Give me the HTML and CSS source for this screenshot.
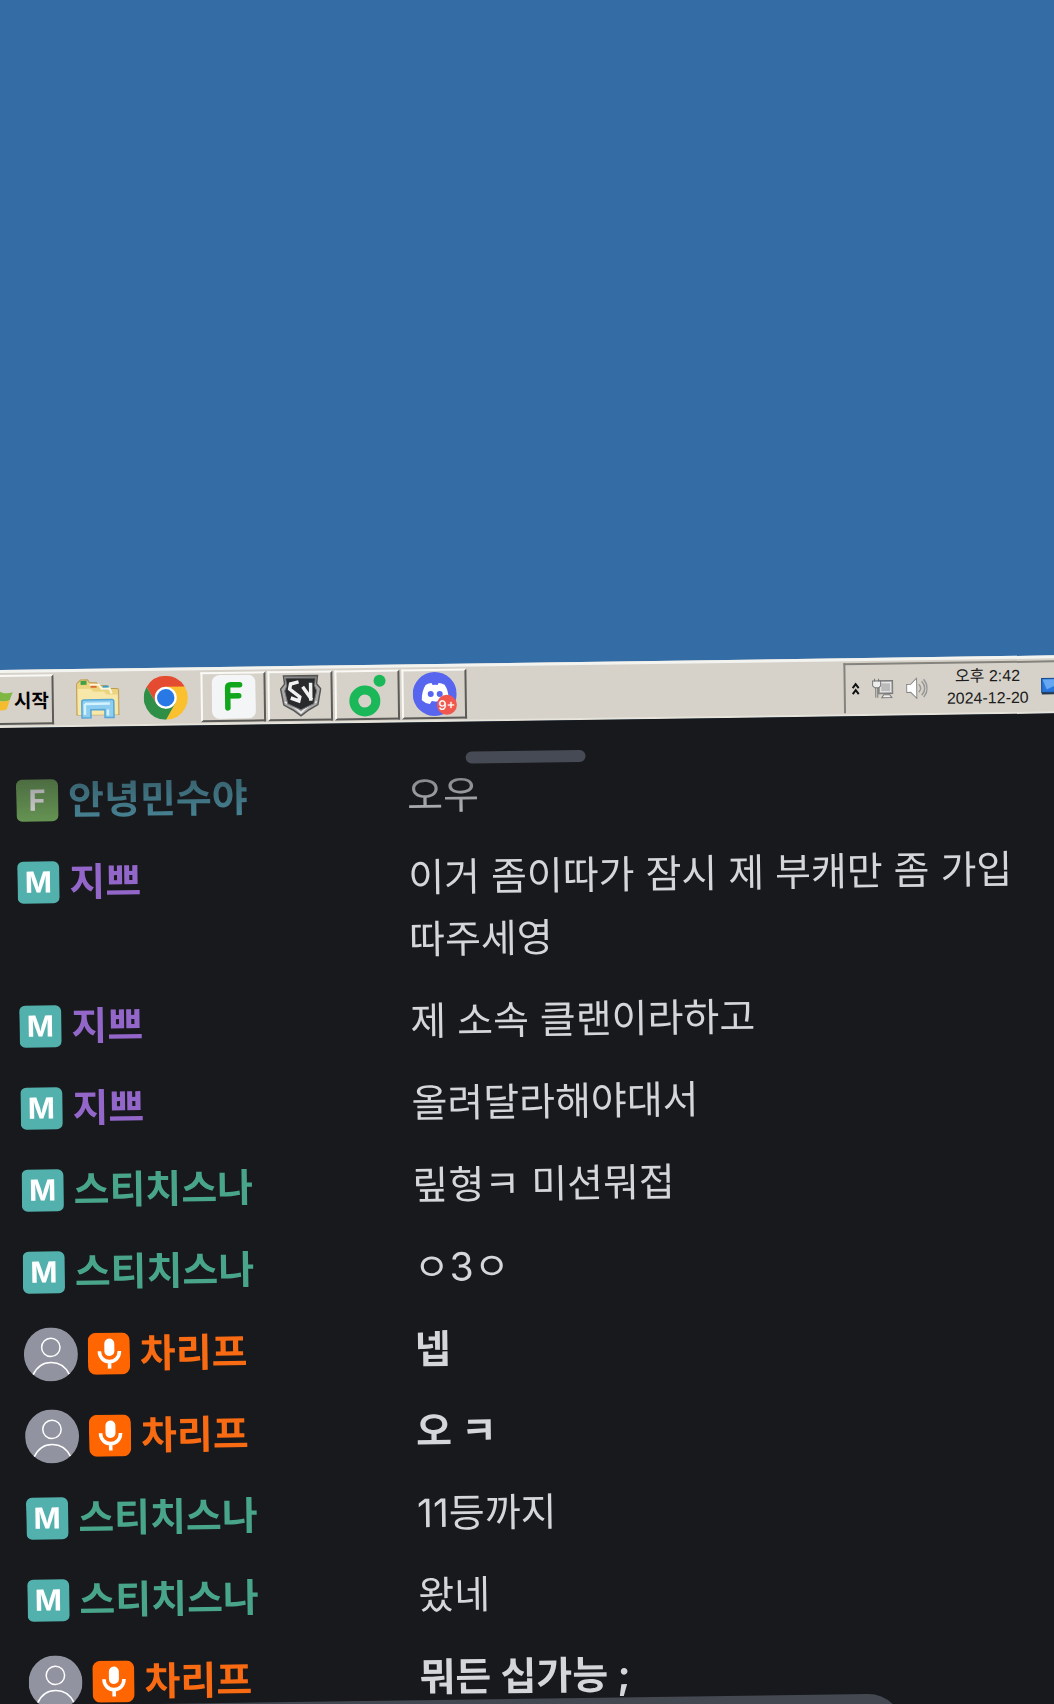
FILE: index.html
```html
<!DOCTYPE html>
<html lang="ko">
<head>
<meta charset="utf-8">
<meta name="viewport" content="width=device-width, initial-scale=1">
<title>채팅</title>
<link rel="stylesheet" href="styles.css">
</head>
<body>
<svg class="symbols" aria-hidden="true">
  <symbol id="person" viewBox="0 0 54 54">
    <circle cx="27" cy="27" r="27" fill="#9194a0"/>
    <g fill="none" stroke="#fff" stroke-width="1.5">
      <circle cx="27" cy="20" r="9.2"/>
      <path d="M9 47C13 38.500 20 35 27 35s14 3.500 18 12"/>
    </g>
  </symbol>
  <symbol id="mic" viewBox="0 0 42 42">
    <rect width="42" height="42" rx="8" fill="#ff6500"/>
    <rect x="16.500" y="6" width="10" height="17.500" rx="5" fill="#fff"/>
    <path d="M11.500 18.500c0 6.500 4.500 10.500 10 10.500s10-4 10-10.500M21.500 29v7" fill="none" stroke="#fff" stroke-width="3.600"/>
  </symbol>
</svg>
<div class="viewport">
  <div class="scene">
    <div class="desktop"></div>
    <nav class="taskbar" aria-label="작업 표시줄">
      <button class="start" type="button">
        <svg width="26" height="24" viewBox="0 0 26 24" aria-hidden="true">
          <path d="M3 3c4-3 6-2 9 0l-2 8c-3-2-6-2-9 0z" fill="#e8562a"/>
          <path d="M11 3c5 3 9 3 14 1l-3 8c-4 2-8 2-12 0z" fill="#7eb842"/>
          <path d="M1 13c3-2 6-2 9 0l-2 8c-3-2-6-2-9 0z" fill="#3f82d0"/>
          <path d="M10 12c4 2 8 2 12 0l-3 9c-4 2-8 2-11 0z" fill="#f5bd2d"/>
        </svg>
        <span>시작</span>
      </button>
      <button class="launcher" type="button" aria-label="파일 탐색기">
        <svg width="44" height="42" viewBox="0 0 44 42">
          <path d="M1 7q0-2 2-3l2-2h7l2 3h7l2 3h8l2 3h8q2 0 2 2v24H1z" fill="#ecd37f" stroke="#bd9d50"/>
          <path d="M2 11h13l3 3h10l3 3h11v20H2z" fill="#f7e7a8"/>
          <path d="M5 3h6v4H5z" fill="#43a047"/><path d="M15 6h6v4h-6z" fill="#d86831"/><path d="M27 8h6v4h-6z" fill="#3a9cca"/>
          <path d="M14 7h9l3 4h8l2 5" fill="none" stroke="#fff8d8" stroke-width="2"/>
          <path d="M6 24q0-2 2-2h28q2 0 2 2v16h-9v-8H15v8H6z" fill="#8dcef0" stroke="#56a6d7" stroke-width="1.500"/>
          <path d="M9 26h25M9 26v11M32 32v6" stroke="#d4f2ff" stroke-width="2.500" fill="none"/>
        </svg>
      </button>
      <button class="launcher" type="button" aria-label="Chrome">
        <svg width="44" height="44" viewBox="0 0 48 48">
          <path d="M24 24 3.200 12A24 24 0 0 1 44.800 12z" fill="#e54b30"/>
          <path d="M24 24 44.800 12A24 24 0 0 1 24 48z" fill="#fbc02d"/>
          <path d="M24 12h20.800L34.400 30z" fill="#fbc02d"/>
          <path d="M13.600 30 3.200 12 24 12z" fill="#e54b30"/>
          <path d="M3.200 12 13.600 30 24 36 34.400 30 24 48A24 24 0 0 1 3.200 12z" fill="#2f8f46"/>
          <circle cx="24" cy="24" r="12" fill="#fff"/><circle cx="24" cy="24" r="9.500" fill="#2878e6"/>
        </svg>
      </button>
      <div class="tasks">
        <button class="task" type="button" aria-label="F">
          <svg width="44" height="44" viewBox="0 0 44 44">
            <rect width="44" height="44" rx="8" fill="#f4f5f6"/>
            <path d="M16 33V13q0-3 3-3h9M16 21h11" fill="none" stroke="#11a61c" stroke-width="5.500" stroke-linecap="round"/>
          </svg>
        </button>
        <button class="task" type="button" aria-label="SA">
          <svg width="42" height="44" viewBox="0 0 42 44">
            <path d="M4 2h34l-1 8 4 5-3 16-9 5-8 6-8-6-9-5L1 15l4-5z" fill="#aaa" stroke="#555" stroke-width="1.500"/>
            <path d="M5 28q8 3 16 11 8-8 16-11" fill="none" stroke="#eee" stroke-width="1.500"/>
            <path d="M6 4h30l-1 8 2 5-3 13-13 6-13-6-3-13 2-5z" fill="#292a2b" stroke="#777"/>
            <path d="m19 8-8 2-1 5 10 8-1 4-8-3M23 13l9 13M31 9v18" fill="none" stroke="#f1f1f1" stroke-width="3.500"/>
          </svg>
        </button>
        <button class="task" type="button" aria-label="o">
          <svg width="38" height="44" viewBox="0 0 38 44">
            <circle cx="16" cy="28" r="11" fill="none" stroke="#1ab858" stroke-width="9"/>
            <circle cx="31" cy="8" r="6" fill="#1ab858"/>
          </svg>
        </button>
        <button class="task" type="button" aria-label="Discord">
          <svg width="44" height="44" viewBox="0 0 44 44">
            <circle cx="22" cy="22" r="22" fill="#5865ee"/>
            <path d="M13 13q3-2 6-2l1 2q3-.5 5 0l1-2q3 0 6 2 4 6 4 15-3 3-8 4l-2-3q-4 1-7 0l-2 3q-5-1-8-4 0-9 4-15z" fill="#fff"/>
            <circle cx="18" cy="22" r="3" fill="#5865ee"/><circle cx="27" cy="22" r="3" fill="#5865ee"/>
          </svg>
          <span class="unread">9+</span>
        </button>
      </div>
      <div class="tray">
        <svg width="8" height="14" viewBox="0 0 8 14" aria-hidden="true"><path d="m1 6 3-4 3 4M1 12l3-4 3 4" fill="none" stroke="#111" stroke-width="2"/></svg>
        <svg width="22" height="22" viewBox="0 0 22 22" aria-hidden="true">
          <rect x="7" y="3" width="14" height="13" fill="#aaa" stroke="#777"/><rect x="9" y="5" width="10" height="9" fill="#bbb" stroke="#eee"/>
          <path d="M10 20h10l-2-3h-6z" fill="#eee" stroke="#777"/>
          <path d="M1 3h8v5l-2 2H3L1 8zM3 1v3M7 1v3M4 10v10M6 10v10" fill="#eee" stroke="#777"/>
        </svg>
        <svg width="22" height="22" viewBox="0 0 22 22" aria-hidden="true">
          <path d="M1 7h4l6-6v20l-6-6H1z" fill="#fff" stroke="#888"/>
          <path d="M13 7q4 4 0 8M16 4q6 7 0 14M18 2q7 9 0 18" fill="none" stroke="#999" stroke-width="1.500"/>
        </svg>
        <time class="clock" datetime="2024-12-20T14:42">오후 2:42<br>2024-12-20</time>
        <svg width="30" height="18" viewBox="0 0 30 18" aria-hidden="true"><rect x="1" y="1" width="28" height="14" fill="#2876dc" stroke="#174682"/><path d="M2 2h26L6 12z" fill="#65a7f3"/><path d="M1 16h28" stroke="#26384d" stroke-width="2"/></svg>
      </div>
    </nav>
    <main class="chat">
      <div class="handle"></div>
      <ul class="messages">
        <li class="message"><span class="author blue"><span class="badge fan">F</span>안녕민수야</span><span class="text">오우</span></li>
        <li class="message"><span class="author purple"><span class="badge">M</span>지쁘</span><span class="text">이거 좀이따가 잠시 제 부캐만 좀 가입 따주세영</span></li>
        <li class="message"><span class="author purple"><span class="badge">M</span>지쁘</span><span class="text">제 소속 클랜이라하고</span></li>
        <li class="message"><span class="author purple"><span class="badge">M</span>지쁘</span><span class="text">올려달라해야대서</span></li>
        <li class="message"><span class="author green"><span class="badge">M</span>스티치스나</span><span class="text">맆형ㅋ 미션뭐접</span></li>
        <li class="message"><span class="author green"><span class="badge">M</span>스티치스나</span><span class="text">ㅇ3ㅇ</span></li>
        <li class="message host"><span class="author"><svg class="avatar"><use href="#person"/></svg><svg class="mic"><use href="#mic"/></svg>차리프</span><span class="text">넵</span></li>
        <li class="message host"><span class="author"><svg class="avatar"><use href="#person"/></svg><svg class="mic"><use href="#mic"/></svg>차리프</span><span class="text">오 ㅋ</span></li>
        <li class="message"><span class="author green"><span class="badge">M</span>스티치스나</span><span class="text">11등까지</span></li>
        <li class="message"><span class="author green"><span class="badge">M</span>스티치스나</span><span class="text">왔네</span></li>
        <li class="message host"><span class="author"><svg class="avatar"><use href="#person"/></svg><svg class="mic"><use href="#mic"/></svg>차리프</span><span class="text">뭐든 십가능 ;</span></li>
      </ul>
      <div class="panel"></div>
    </main>
  </div>
</div>
</body>
</html>
```
FILE: styles.css
```css
* { box-sizing: border-box; }

body {
  margin: 0;
  background: #346ca6;
  font-family: Inter, "Noto Sans CJK KR", sans-serif;
}

button { font: inherit; }

.symbols { display: none; }

.viewport {
  height: 100vh;
  overflow: hidden;
}

/* The whole screen is tilted; it bleeds past the window on both sides. */
.scene {
  display: flex;
  flex-direction: column;
  min-height: calc(100vh + 40px);
  margin: 0 -30px;
  transform: rotate(-0.8deg);
  transform-origin: 30px 0;
}

.desktop { flex: 0 0 670px; }

.taskbar {
  display: flex;
  align-items: center;
  height: 58px;
  padding-left: 4px;
  background: #d6d2c9;
  border-top: 3px solid #f3f3f0;
  border-bottom: 2px solid #e6e3db;
}

.start, .task {
  display: flex;
  align-items: center;
  justify-content: center;
  height: 50px;
  padding: 0;
  background: #d6d2c9;
  border: 2px solid;
  border-color: #faf9f6 #5c5b58 #5c5b58 #faf9f6;
}

.start {
  gap: 0;
  width: 70px;
  margin-right: 22px;
  padding-right: 3px;
  justify-content: flex-end;
  color: #000;
  font-size: 19px;
  font-weight: 700;
}

.start svg { flex: none; }

.launcher {
  display: flex;
  margin-right: 24px;
  padding: 0;
  background: none;
  border: 0;
}

.tasks {
  display: flex;
  gap: 2px;
  margin-left: -11px;
}

.task {
  position: relative;
  width: 65px;
}

.unread {
  position: absolute;
  right: 8px;
  bottom: 2px;
  width: 20px;
  height: 20px;
  border-radius: 50%;
  background: #f0584f;
  color: #fff;
  font-size: 13px;
  font-weight: 500;
  line-height: 20px;
  text-align: center;
}

.tray {
  display: flex;
  align-items: center;
  gap: 12px;
  width: 250px;
  height: 50px;
  margin-left: auto;
  padding-left: 6px;
  border: solid #85837e;
  border-width: 2px 0 0 2px;
}

.tray svg { flex: none; }

.clock {
  margin-left: 7px;
  color: #1c1c1c;
  font: 16px/22px "Liberation Sans", "Noto Sans CJK KR", sans-serif;
  text-align: center;
  white-space: nowrap;
}

.chat {
  flex: 1;
  padding: 30px 60px 0 35px;
  background: #18191c;
}

.handle {
  width: 120px;
  height: 12px;
  margin: 0 auto;
  border-radius: 6px;
  background: #464a54;
}

.messages {
  display: flex;
  flex-direction: column;
  gap: 20px;
  margin: 0;
  padding: 0;
  list-style: none;
  -webkit-mask-image: linear-gradient(rgba(0, 0, 0, 0.5), #000 80px);
  mask-image: linear-gradient(rgba(0, 0, 0, 0.5), #000 80px);
}

.message {
  display: grid;
  grid-template-columns: 391px 1fr;
  color: #d5d6da;
  font-size: 39px;
  line-height: 62px;
}

.author {
  display: flex;
  align-items: center;
  gap: 10px;
  height: 62px;
  font-weight: 700;
  white-space: nowrap;
}

.text { word-break: keep-all; }

.badge {
  width: 42px;
  height: 42px;
  border-radius: 6px;
  background: #52b1ad;
  color: #fff;
  font-size: 29px;
  font-weight: 700;
  line-height: 42px;
  text-align: center;
}

.fan { background: #76ae5f; }

.avatar {
  flex: none;
  width: 54px;
  height: 54px;
}

.mic {
  flex: none;
  width: 42px;
  height: 42px;
}

.blue { color: #529aae; }
.purple { color: #9366c9; }
.green { color: #49a58a; }

.host .author { color: #f96b12; }
.host .text { font-weight: 700; }

.panel {
  position: relative;
  width: 874px;
  height: 70px;
  margin-top: -8px;
  border-radius: 38px;
  background: #444851;
}
```
